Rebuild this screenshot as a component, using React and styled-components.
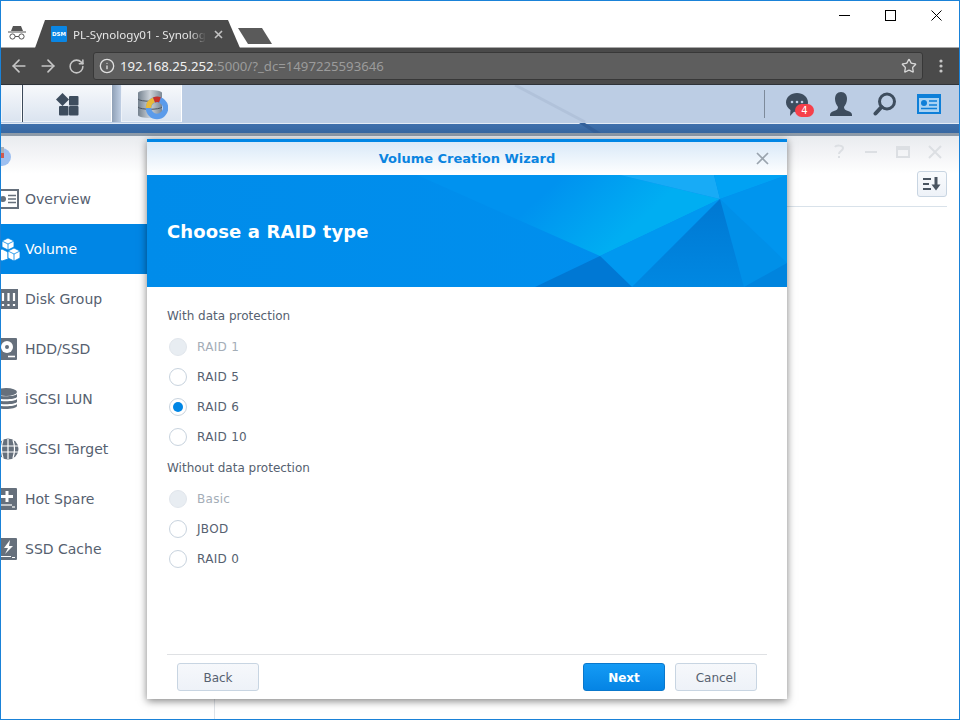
import React from "react";
import styled, { createGlobalStyle } from "styled-components";
import { ArrowLeft, ArrowRight, RotateCw, Info, Star } from "lucide-react";

const Global = createGlobalStyle`
  html, body { margin: 0; padding: 0; background: #fff; }
  * { box-sizing: border-box; }
`;

const UI = `"DejaVu Sans", Verdana, sans-serif`;
const CHROME = `"Noto Sans", "Open Sans", sans-serif`;

const Frame = styled.div`
  position: relative; width: 960px; height: 720px; border: 1px solid #1a82d8;
  overflow: hidden; display: flex; flex-direction: column; background: #fff;
  font-family: ${UI};
`;
const TitleBar = styled.div`
  height: 47px; flex: none; display: flex; align-items: flex-end; background: #fff;
  border-bottom: 1px solid #a9a9a9; padding-left: 7px;
`;
const Incognito = styled.svg`width: 18px; height: 18px; margin-bottom: 6px; flex: none;`;
const Tab = styled.div`
  width: 205px; height: 28px; margin-left: 9px; margin-bottom: -1px; padding-left: 16px; flex: none;
  background: #4a4a4a; display: flex; align-items: center; gap: 6px;
  clip-path: polygon(10px 0, 193px 0, 205px 100%, 0 100%);
`;
const Favicon = styled.span`
  width: 16px; height: 16px; background: #0a86e4; color: #fff; font: bold 5.5px ${UI};
  display: flex; align-items: center; justify-content: center; flex: none; border-radius: 1px;
`;
const TabTitle = styled.span`
  width: 133px; font: 11.6px ${CHROME}; color: #e6e6e6; white-space: nowrap; overflow: hidden;
  -webkit-mask-image: linear-gradient(90deg, #000 88%, transparent 100%);
  mask-image: linear-gradient(90deg, #000 88%, transparent 100%);
`;
const TabClose = styled.svg`width: 9px; height: 9px; margin-left: 2px; flex: none;`;
const NewTab = styled.div`
  width: 34px; height: 16px; margin-left: -2px; margin-bottom: 3px; flex: none; background: #5a5a5a;
  clip-path: polygon(0 0, 24px 0, 34px 100%, 10px 100%);
`;
const WindowControls = styled.div`display: flex; align-self: flex-start; margin-left: auto;`;
const WindowButton = styled.div`
  width: 46px; height: 29px; display: flex; align-items: center; justify-content: center;
`;
const Toolbar = styled.div`
  height: 37px; flex: none; background: #4a4a4a; border-bottom: 1px solid #2f3338;
  display: flex; align-items: center; padding-left: 3px; color: #c6c6c6;
`;
const NavButton = styled.div`
  width: 29px; display: flex; justify-content: center; align-items: center; flex: none;
`;
const Omnibox = styled.div`
  flex: 1; height: 28px; margin-left: 2px; border: 1px solid #383838; border-radius: 3px;
  background: #5e5e5e; display: flex; align-items: center; gap: 5px; padding: 0 5px;
  font: 13.2px ${CHROME}; color: #9b9b9b; white-space: nowrap;
`;
const Host = styled.span`color: #f0f0f0;`;
const StarSlot = styled.span`margin-left: auto; display: flex;`;
const MenuDots = styled.svg`width: 36px; height: 16px; flex: none;`;
const DesktopBar = styled.div`
  position: relative; height: 38px; flex: none; background: #bccde4; display: flex; align-items: stretch;
  padding-bottom: 1px;
`;
const Diagonal = styled.svg`position: absolute; left: 0; top: 0; width: 958px; height: 48px; pointer-events: none;`;
const TaskPiece = styled.div`
  width: ${p => p.$w}px; flex: none; display: flex; align-items: center; justify-content: center;
  background: linear-gradient(180deg, #f6f8fb, #dbe4f0);
  border: 1px solid #eef2f8; border-right: 1px solid #fff;
`;
const TaskGap = styled.div`
  width: ${p => p.$w}px; flex: none; background: ${p => p.$shade ? "linear-gradient(90deg, #8fa0b6, #c0cfe4)" : "#3c4a5a"};
`;
const Tray = styled.div`margin-left: auto; display: flex; align-items: center; padding-right: 8px;`;
const TraySep = styled.div`
  width: 1px; height: 28px; background: #7d8a9a; margin-right: 10px;
`;
const TrayIcon = styled.div`
  position: relative; width: 44px; display: flex; justify-content: center;
`;
const Badge = styled.span`
  position: absolute; left: 20px; top: 12px; width: 19px; height: 13px; border-radius: 7px;
  background: #f6404a; color: #fff; font: 10px/13px ${UI}; text-align: center;
`;
const Strip = styled.div`
  height: 13px; flex: none; border-top: 1px solid #e4ecf6;
  background: linear-gradient(180deg, #3f70ac 0, #3767a1 75%, #8d9aa8 76%, #8d9aa8 100%);
`;
const AppWindow = styled.div`flex: 1; display: flex; flex-direction: column; min-height: 0; background: #fff;`;
const AppHead = styled.div`
  height: 38px; flex: none; background: linear-gradient(180deg, #e9ebef, #fff);
  display: flex; align-items: center; justify-content: space-between; padding-right: 15px;
`;
const AppLogo = styled.svg`width: 12px; height: 22px; margin-top: 2px;`;
const AppControls = styled.div`display: flex; gap: 14px; margin-top: -6px;`;
const AppBody = styled.div`flex: 1; display: flex; min-height: 0;`;
const Sidebar = styled.nav`width: 213px; flex: none; display: flex; flex-direction: column;`;
const NavItem = styled.div`
  height: 50px; display: flex; align-items: center; font-size: 14px;
  background: ${p => p.$active ? "#0086e5" : "transparent"};
  color: ${p => p.$active ? "#fff" : "#566170"};
`;
const NavIcon = styled.svg`width: 24px; height: 24px; flex: none;`;
const Main = styled.main`flex: 1; border-left: 1px solid #dfe3e8; padding: 0 12px 0 0; display: flex; flex-direction: column;`;
const MainBar = styled.div`
  height: 33px; flex: none; border-bottom: 1px solid #d9e2ea; display: flex; justify-content: flex-end; align-items: flex-start;
`;
const SortButton = styled.div`
  width: 30px; height: 26px; margin-top: -3px; border: 1px solid #c8d5e2; border-radius: 3px;
  background: linear-gradient(180deg, #f9fbfd, #eef2f8); display: flex; align-items: center; justify-content: center;
`;
const Modal = styled.section`
  position: absolute; left: 146px; top: 138px; width: 640px; height: 560px; background: #fff;
  border-top: 3px solid #0086e5; box-shadow: 0 2px 8px rgba(0,0,0,.5);
  display: flex; flex-direction: column;
`;
const ModalHead = styled.header`
  position: relative; height: 33px; flex: none; background: linear-gradient(180deg, #d9e9f8, #fff);
  display: flex; align-items: center; justify-content: center;
  color: #0a84e0; font-weight: bold; font-size: 13px;
`;
const ModalClose = styled.svg`position: absolute; right: 18px; top: 10px; width: 13px; height: 13px;`;
const Banner = styled.div`
  position: relative; height: 112px; flex: none; background: linear-gradient(90deg, #008cea, #0090ef);
  display: flex; align-items: center; padding-left: 20px; color: #fff; font-weight: bold; font-size: 18px;
`;
const BannerArt = styled.svg`position: absolute; left: 0; top: 0; width: 640px; height: 112px;`;
const BannerTitle = styled.h1`position: relative; margin: 0; font: inherit; letter-spacing: .12px;`;
const ModalBody = styled.div`flex: 1; padding: 13px 20px 0; display: flex; flex-direction: column;`;
const GroupLabel = styled.div`
  height: 30px; margin-bottom: 2px; padding-top: 2px; display: flex; align-items: center; font-size: 12px; color: #566170;
`;
const RadioRow = styled.label`
  height: 30px; display: flex; align-items: center; gap: 10px; padding-left: 2px;
  font-size: 12px; letter-spacing: .3px; color: ${p => p.$disabled ? "#a4adb7" : "#566170"};
`;
const RadioDot = styled.span`
  width: 18px; height: 18px; border-radius: 50%; flex: none; display: flex; align-items: center; justify-content: center;
  border: 1px solid ${p => p.$disabled ? "#e1e6ec" : "#c8d3de"};
  background: ${p => p.$disabled ? "#e8edf2" : "#fff"};
  &::after {
    content: ""; width: 10px; height: 10px; border-radius: 50%;
    background: ${p => p.$checked ? "#0086e5" : "transparent"};
  }
`;
const ModalFoot = styled.footer`
  height: 45px; flex: none; margin: 0 20px; padding: 8px 10px 0; border-top: 1px solid #dfe1e4;
  display: flex; gap: 10px; align-items: flex-start;
`;
const Btn = styled.button`
  width: 82px; height: 28px; border-radius: 3px; padding: 2px 0 0; font-family: ${UI}; font-size: 12px;
  margin-right: ${p => p.$push ? "auto" : 0};
  border: 1px solid ${p => p.$primary ? "#0a78cc" : "#c8d5e2"};
  background: ${p => p.$primary ? "linear-gradient(180deg, #149bf5, #0584e4)" : "linear-gradient(180deg, #f6f8fb, #eef2f8)"};
  color: ${p => p.$primary ? "#fff" : "#566170"};
  font-weight: ${p => p.$primary ? "bold" : "normal"};
`;

const G = "#66707c";
const Overview = () => (
  <NavIcon viewBox="0 0 24 24">
    <rect x="-6" y="3" width="23" height="18" fill="#fff" stroke={G} strokeWidth="2" />
    <circle cx="2" cy="12" r="3" fill={G} />
    <path d="M7 8.500h8M7 12h8M7 15.500h8" stroke={G} strokeWidth="1.600" />
  </NavIcon>
);
const VolumeIcon = () => (
  <NavIcon viewBox="0 0 24 24">
    <g fill="#fff" stroke="#0086e5" strokeWidth=".8">
      <path d="M7 1l6 3v6l-6 3-6-3V4z" />
      <path d="M1 12l6 3v7l-6 2-6-3v-6z" />
      <path d="M13 11l6 3v7l-6 3-6-3v-7z" />
      <path d="M1 4l6 3 6-3M7 7v6M7 14l6 3 6-3M13 17v7" fill="none" />
    </g>
  </NavIcon>
);
const DiskGroup = () => (
  <NavIcon viewBox="0 0 24 24">
    <rect x="-6" y="2" width="23" height="20" fill={G} />
    <path d="M2 6v8M7.500 6v8M13 6v8" stroke="#fff" strokeWidth="2.200" />
    <path d="M2 17v2M7.500 17v2M13 17v2" stroke="#fff" strokeWidth="2.200" />
  </NavIcon>
);
const Hdd = () => (
  <NavIcon viewBox="0 0 24 24">
    <rect x="-6" y="1" width="22" height="22" rx="1" fill={G} />
    <circle cx="6" cy="10" r="6" fill="#fff" />
    <circle cx="6" cy="10" r="2" fill={G} />
    <path d="M7 19.500h7" stroke="#fff" strokeWidth="1.600" />
  </NavIcon>
);
const Lun = () => (
  <NavIcon viewBox="0 0 24 24">
    <ellipse cx="5" cy="5" rx="11" ry="4" fill={G} />
    <path d="M-6 7c2 3 20 3 22 0v3c-2 3-20 3-22 0zM-6 12c2 3 20 3 22 0v3c-2 3-20 3-22 0zM-6 17c2 3 20 3 22 0v2c-1 4-21 4-22 0z" fill={G} />
  </NavIcon>
);
const Target = () => (
  <NavIcon viewBox="0 0 24 24">
    <circle cx="7" cy="12" r="10.500" fill={G} />
    <path d="M7 2v20M-3 9h20M-3 15h20M2 3c-2 6-2 12 0 18M12 3c2 6 2 12 0 18" stroke="#fff" strokeWidth="1.200" fill="none" />
  </NavIcon>
);
const HotSpare = () => (
  <NavIcon viewBox="0 0 24 24">
    <rect x="-6" y="1" width="22" height="22" rx="1" fill={G} />
    <path d="M6 4v11M0 9.500h12" stroke="#fff" strokeWidth="3" />
    <path d="M-2 18h13" stroke="#fff" strokeWidth="1.200" />
    <path d="M11 20h3" stroke="#fff" strokeWidth="1.200" />
  </NavIcon>
);
const SsdCache = () => (
  <NavIcon viewBox="0 0 24 24">
    <rect x="-6" y="1" width="22" height="22" rx="1" fill={G} />
    <path d="M9 3L3 11h4l-3 6 8-8H8z" fill="#fff" />
    <path d="M-2 19.500h12M11 20.500h3" stroke="#fff" strokeWidth="1.200" />
  </NavIcon>
);

const NAV = [
  ["Overview", Overview], ["Volume", VolumeIcon], ["Disk Group", DiskGroup], ["HDD/SSD", Hdd],
  ["iSCSI LUN", Lun], ["iSCSI Target", Target], ["Hot Spare", HotSpare], ["SSD Cache", SsdCache],
];
const PROTECTED = [["RAID 1", true], ["RAID 5"], ["RAID 6", false, true], ["RAID 10"]];
const UNPROTECTED = [["Basic", true], ["JBOD"], ["RAID 0"]];

const Radio = ({ label, disabled, checked }) => (
  <RadioRow $disabled={disabled}>
    <RadioDot $disabled={disabled} $checked={checked} />
    {label}
  </RadioRow>
);

const Ctl = ({ children }) => (
  <svg width="18" height="18" viewBox="0 0 18 18" fill="none" stroke="#dcdfe3" strokeWidth="2">{children}</svg>
);

export default function App() {
  return (
    <>
      <Global />
      <Frame>
        <TitleBar>
          <Incognito viewBox="0 0 18 18">
            <path d="M3 8L5 3h8l2 5zM0 8.500h18v1H0z" fill="#555" />
            <circle cx="4.500" cy="13.500" r="2.600" fill="none" stroke="#555" strokeWidth="1" />
            <circle cx="13.500" cy="13.500" r="2.600" fill="none" stroke="#555" strokeWidth="1" />
            <path d="M7 13.500h4" stroke="#555" />
          </Incognito>
          <Tab>
            <Favicon>DSM</Favicon>
            <TabTitle>PL-Synology01 - Synology DiskStation</TabTitle>
            <TabClose viewBox="0 0 9 9"><path d="M1 1l7 7M8 1L1 8" stroke="#c2c2c2" strokeWidth="1.600" /></TabClose>
          </Tab>
          <NewTab />
          <WindowControls>
            <WindowButton><svg width="11" height="11"><path d="M0 5.500h11" stroke="#000" /></svg></WindowButton>
            <WindowButton><svg width="11" height="11"><rect x=".5" y=".5" width="10" height="10" fill="none" stroke="#000" /></svg></WindowButton>
            <WindowButton><svg width="11" height="11"><path d="M.5.5l10 10M10.500.5l-10 10" stroke="#000" /></svg></WindowButton>
          </WindowControls>
        </TitleBar>
        <Toolbar>
          <NavButton><ArrowLeft size={20} /></NavButton>
          <NavButton><ArrowRight size={20} /></NavButton>
          <NavButton><RotateCw size={17} strokeWidth={2.200} /></NavButton>
          <Omnibox>
            <Info size={16} color="#e0e0e0" />
            <span><Host>192.168.25.252</Host>:5000/?_dc=1497225593646</span>
            <StarSlot><Star size={16} color="#d8d8d8" /></StarSlot>
          </Omnibox>
          <MenuDots viewBox="0 0 36 16">
            <circle cx="18" cy="3" r="1.600" fill="#c6c6c6" /><circle cx="18" cy="8" r="1.600" fill="#c6c6c6" /><circle cx="18" cy="13" r="1.600" fill="#c6c6c6" />
          </MenuDots>
        </Toolbar>
        <DesktopBar>
          <Diagonal viewBox="0 0 958 48">
            <path d="M514 0L584 37" stroke="#b1c2da" strokeWidth="3" fill="none" />
            <path d="M578 38h6L600 48h-7z" fill="#33609a" />
          </Diagonal>
          <TaskPiece $w={21} />
          <TaskGap $w={1} />
          <TaskPiece $w={89}>
            <svg width="24" height="24" viewBox="0 0 24 24">
              <path d="M6.500 1L13 7.500 6.500 14 0 7.500z" fill="#3e4d5e" />
              <rect x="13" y="4" width="9.500" height="9.500" rx="1" fill="#3e4d5e" />
              <rect x="3" y="14" width="9.500" height="9.500" rx="1" fill="#3e4d5e" />
              <rect x="13" y="14" width="9.500" height="9.500" rx="1" fill="#3e4d5e" />
            </svg>
          </TaskPiece>
          <TaskGap $w={9} $shade />
          <TaskPiece $w={61}>
            <svg width="32" height="32" viewBox="0 0 32 32">
              <defs>
                <linearGradient id="drum" x1="0" x2="1">
                  <stop offset="0" stopColor="#75828f" /><stop offset=".5" stopColor="#cdd3da" /><stop offset="1" stopColor="#7c8894" />
                </linearGradient>
              </defs>
              <path d="M2 5c0-4 24-4 24 0v22c0 4-24 4-24 0z" fill="url(#drum)" />
              <path d="M2 11c2 3 22 3 24 0M2 19c2 3 22 3 24 0" stroke="#4c5560" strokeWidth="1" fill="none" />
              <circle cx="21" cy="20" r="8.500" fill="none" stroke="#5b9bea" strokeWidth="5.500" />
              <path d="M12.500 20a8.500 8.500 0 0 1 5.500-8" fill="none" stroke="#e9b93a" strokeWidth="5.500" />
              <path d="M18 12a8.500 8.500 0 0 1 6-.2" fill="none" stroke="#c8302a" strokeWidth="5.500" />
            </svg>
          </TaskPiece>
          <Tray>
            <TraySep />
            <TrayIcon>
              <svg width="24" height="24" viewBox="0 0 24 24">
                <path d="M12 1c6 0 11 4 11 9.500S18 20 12 20c-1 0-2 0-3-.3L5 24l.5-6C3 16 1 13.500 1 10.500 1 5 6 1 12 1z" fill="#3e4d5e" />
                <circle cx="7" cy="10" r="1.300" fill="#bccde4" /><circle cx="12" cy="10" r="1.300" fill="#bccde4" /><circle cx="17" cy="10" r="1.300" fill="#bccde4" />
              </svg>
              <Badge>4</Badge>
            </TrayIcon>
            <TrayIcon>
              <svg width="24" height="24" viewBox="0 0 24 24">
                <path d="M12 0c4 0 6 3 6 7 0 3-1.500 6-3 8 0 2 1 3 4 4s4 2 4 4v1H1v-1c0-2 1-3 4-4s4-2 4-4c-1.500-2-3-5-3-8 0-4 2-7 6-7z" fill="#3e4d5e" />
              </svg>
            </TrayIcon>
            <TrayIcon>
              <svg width="24" height="24" viewBox="0 0 24 24">
                <circle cx="14" cy="9.500" r="7.500" fill="none" stroke="#3e4d5e" strokeWidth="3" />
                <path d="M8.500 15L2.500 21.500" stroke="#3e4d5e" strokeWidth="4" strokeLinecap="round" />
              </svg>
            </TrayIcon>
            <TrayIcon>
              <svg width="24" height="20" viewBox="0 0 24 20">
                <rect width="24" height="20" fill="#0e7fd8" />
                <rect x="2" y="4" width="20" height="14" fill="#a9d2f3" />
                <circle cx="7" cy="9" r="3" fill="#0e7fd8" />
                <path d="M12 7h8M12 11h8M4 14.500h16" stroke="#0e7fd8" strokeWidth="1.600" />
              </svg>
            </TrayIcon>
          </Tray>
        </DesktopBar>
        <Strip />
        <AppWindow>
          <AppHead>
            <AppLogo viewBox="0 0 12 22">
              <circle cx="1" cy="12" r="9" fill="#9dbff0" />
              <path d="M0 2h3v10H0z" fill="#aab2bb" />
              <path d="M0 8h3v5H0z" fill="#d05a50" />
            </AppLogo>
            <AppControls>
              <Ctl><path d="M5 4c1-2 8-2 8 1 0 3-4 3-4 6" /><path d="M9 13v2" /></Ctl>
              <Ctl><path d="M3 9h12" /></Ctl>
              <Ctl><rect x="3" y="4" width="12" height="10" /><path d="M3 6h12" /></Ctl>
              <Ctl><path d="M3 3l12 12M15 3L3 15" /></Ctl>
            </AppControls>
          </AppHead>
          <AppBody>
            <Sidebar>
              {NAV.map(([label, Icon]) => (
                <NavItem key={label} $active={label === "Volume"}>
                  <Icon />
                  {label}
                </NavItem>
              ))}
            </Sidebar>
            <Main>
              <MainBar>
                <SortButton>
                  <svg width="20" height="14" viewBox="0 0 20 14">
                    <path d="M1 2h8M1 7h6M1 12h8" stroke="#4a5561" strokeWidth="2" />
                    <path d="M14 0v9" stroke="#4a5561" strokeWidth="3" />
                    <path d="M9.500 7.500h9l-4.500 6z" fill="#4a5561" />
                  </svg>
                </SortButton>
              </MainBar>
            </Main>
          </AppBody>
        </AppWindow>
        <Modal>
          <ModalHead>
            Volume Creation Wizard
            <ModalClose viewBox="0 0 13 13"><path d="M1 1l11 11M12 1L1 12" stroke="#9aa4ae" strokeWidth="1.700" /></ModalClose>
          </ModalHead>
          <Banner>
            <BannerArt viewBox="0 0 640 112">
              <defs>
                <linearGradient id="glow" gradientUnits="userSpaceOnUse" x1="400" y1="15" x2="458" y2="78">
                  <stop offset="0" stopColor="#0092ef" /><stop offset="1" stopColor="#00aef2" />
                </linearGradient>
                <linearGradient id="dark" x1="0" y1="0" x2="0" y2="1">
                  <stop offset="0" stopColor="#0078d2" /><stop offset="1" stopColor="#0088e2" />
                </linearGradient>
              </defs>
              <path d="M473 0L573 24 453 81 270 0z" fill="url(#glow)" />
              <path d="M473 0H567L573 24z" fill="#18abf6" />
              <path d="M567 0H640L573 24z" fill="#00a2f3" />
              <path d="M573 24L640 0V88z" fill="#0095ee" />
              <path d="M573 24L640 88V90L597 112z" fill="#0090e8" />
              <path d="M453 81L573 24 485 112z" fill="#0098f0" />
              <path d="M573 24L597 112H485z" fill="url(#dark)" />
              <path d="M453 81L485 112H388z" fill="#0078d4" />
              <path d="M640 88V112H597z" fill="#0084de" />
            </BannerArt>
            <BannerTitle>Choose a RAID type</BannerTitle>
          </Banner>
          <ModalBody>
            <GroupLabel>With data protection</GroupLabel>
            {PROTECTED.map(([l, d, c]) => <Radio key={l} label={l} disabled={d} checked={c} />)}
            <GroupLabel>Without data protection</GroupLabel>
            {UNPROTECTED.map(([l, d, c]) => <Radio key={l} label={l} disabled={d} checked={c} />)}
          </ModalBody>
          <ModalFoot>
            <Btn $push>Back</Btn>
            <Btn $primary>Next</Btn>
            <Btn>Cancel</Btn>
          </ModalFoot>
        </Modal>
      </Frame>
    </>
  );
}
